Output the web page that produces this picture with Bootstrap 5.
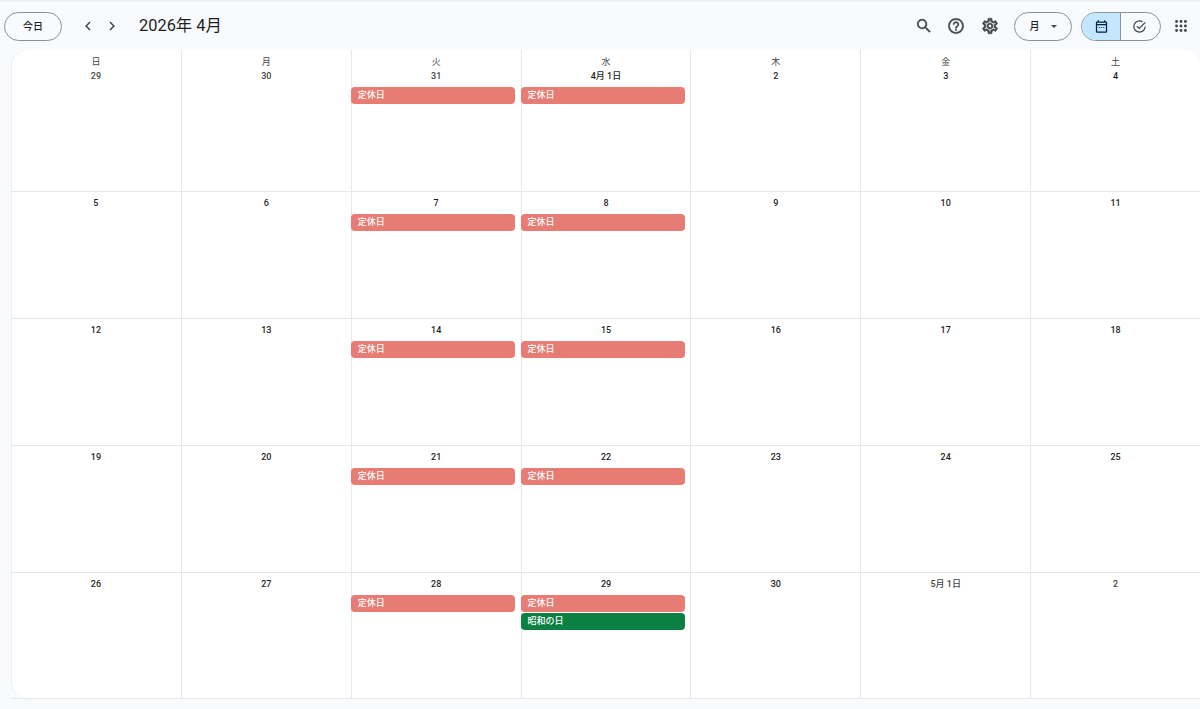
<!DOCTYPE html>
<html lang="ja">
<head>
    <meta charset="UTF-8">
    <meta name="viewport" content="width=device-width, initial-scale=1.0">
    <title>2026年 4月</title>
    <link href="https://cdn.jsdelivr.net/npm/bootstrap@5.3.0/dist/css/bootstrap.min.css" rel="stylesheet">
    <style>
        html, body { height: 100%; }
        body {
            background: #f8fafd;
            color: #1f1f1f;
            font-family: Roboto, "Noto Sans CJK JP", sans-serif;
            overflow: hidden;
        }
        .top-rule { height: 2px; background: #f0f1f2; }
        .cal-header { height: 48px; padding: 0 0 0 4px; }
        .pill-btn {
            height: 29px;
            width: 58px;
            padding: 0;
            border: 1px solid #8e918f;
            border-radius: 15px;
            background: transparent;
            color: #1f1f1f;
            font-size: 10px;
            font-weight: 500;
        }
        .nav-arrows { margin-left: 17px; gap: 6px; }
        .icon-btn {
            width: 18px;
            height: 18px;
            padding: 0;
            border: 0;
            background: none;
            line-height: 0;
        }
        .icon-btn svg { width: 18px; height: 18px; fill: #444746; }
        .tools .icon-btn, .tools .icon-btn svg { width: 20px; height: 20px; }
        .tools .icon-btn svg { stroke: #444746; stroke-width: .4; }
        .tools .icon-btn .gear-icon { stroke-width: .8; }
        .tools .icon-btn .apps-icon { stroke: none; }
        .cal-title { margin: 0 0 0 18px; font-size: 16.4px; font-weight: 400; line-height: 24px; }
        .tools { margin-right: 9px; }
        .tool-help { margin: 0 14px 0 12px; }
        .tool-view { margin: 0 9px 0 14px; }
        .view-btn { gap: 11px; }
        .view-caret {
            border-top: 3px solid #444746;
            border-left: 3px solid transparent;
            border-right: 3px solid transparent;
        }
        .view-switch {
            width: 80px;
            height: 29px;
            border: 1px solid #8e918f;
            border-radius: 15px;
            overflow: hidden;
            margin-right: 10px;
        }
        .view-switch > div { flex: 1; }
        .view-switch > div + div { border-left: 1px solid #8e918f; padding-right: 2px; }
        .view-on { background: #c2e7ff; padding-left: 1px; }
        .view-switch svg { width: 15px; height: 15px; }
        .grid-wrap { margin-left: 11px; border-bottom: 1px solid #e6e8ec; }
        .grid-panel {
            background: #fff;
            box-shadow: inset 1px 0 0 #eceef2;
            border-radius: 16px 16px 0 16px;
            overflow: hidden;
        }
        .week {
            display: grid;
            grid-template-columns: repeat(7, 1fr);
            height: 127px;
            border-bottom: 1px solid #e4e7ec;
        }
        .week:first-child { height: 142px; }
        .week:last-child { border-bottom: 0; height: 125px; }
        .day { padding-top: 4px; text-align: center; min-width: 0; }
        .day + .day { border-left: 1px solid #e4e7ec; }
        .week:first-child .day { padding-top: 6px; }
        .wd { font-size: 9px; line-height: 12px; margin-bottom: 1px; color: #444746; }
        .dt { font-size: 9px; line-height: 15px; font-weight: 500; color: #1f1f1f; }
        .dt-other { color: #444746; }
        .ev {
            height: 17px;
            margin: 1px 5.5px 0 -1px;
            padding-left: 7px;
            border-radius: 4px;
            color: #fff;
            font-size: 9px;
            font-weight: 500;
            line-height: 16px;
            text-align: left;
        }
        .dt + .ev { margin-top: 3px; }
        .ev-off { background: #e67c73; }
        .ev-hol { background: #0b8043; }
    </style>
</head>
<body>
    <div class="top-rule"></div>
    <header class="cal-header d-flex align-items-center">
        <button class="btn pill-btn">今日</button>
        <div class="d-flex nav-arrows">
            <button class="icon-btn"><svg viewBox="0 0 24 24"><path d="M15.41 7.41 14 6l-6 6 6 6 1.41-1.41L10.83 12z"/></svg></button>
            <button class="icon-btn"><svg viewBox="0 0 24 24"><path d="M10 6 8.59 7.41 13.17 12l-4.58 4.59L10 18l6-6z"/></svg></button>
        </div>
        <h1 class="cal-title">2026年 4月</h1>
        <div class="d-flex align-items-center tools ms-auto">
            <button class="icon-btn"><svg viewBox="-1 -1 26 26"><path d="M15.5 14h-.79l-.28-.27A6.471 6.471 0 0 0 16 9.5 6.5 6.5 0 1 0 9.5 16c1.61 0 3.09-.59 4.23-1.57l.27.28v.79l5 4.99L20.49 19l-4.99-5zm-6 0C7.01 14 5 11.99 5 9.5S7.01 5 9.5 5 14 7.01 14 9.5 11.99 14 9.5 14z"/></svg></button>
            <button class="icon-btn tool-help"><svg viewBox="-1 -1 26 26"><path d="M11 18h2v-2h-2v2zm1-16C6.48 2 2 6.48 2 12s4.48 10 10 10 10-4.48 10-10S17.52 2 12 2zm0 18c-4.41 0-8-3.59-8-8s3.59-8 8-8 8 3.59 8 8-3.59 8-8 8zm0-14c-2.21 0-4 1.79-4 4h2c0-1.1.9-2 2-2s2 .9 2 2c0 2-3 1.75-3 5h2c0-2.25 3-2.5 3-5 0-2.21-1.79-4-4-4z"/></svg></button>
            <button class="icon-btn"><svg class="gear-icon" viewBox="-1 -1 26 26"><path d="M19.43 12.98c.04-.32.07-.64.07-.98 0-.34-.03-.66-.07-.98l2.11-1.65c.19-.15.24-.42.12-.64l-2-3.46c-.09-.16-.26-.25-.44-.25-.06 0-.12.01-.17.03l-2.49 1c-.52-.4-1.08-.73-1.69-.98l-.38-2.65C14.46 2.18 14.25 2 14 2h-4c-.25 0-.46.18-.49.42l-.38 2.65c-.61.25-1.17.59-1.69.98l-2.49-1c-.06-.02-.12-.03-.18-.03-.17 0-.34.09-.43.25l-2 3.46c-.13.22-.07.49.12.64l2.11 1.65c-.04.32-.07.65-.07.98 0 .33.03.66.07.98l-2.11 1.65c-.19.15-.24.42-.12.64l2 3.46c.09.16.26.25.44.25.06 0 .12-.01.17-.03l2.49-1c.52.4 1.08.73 1.69.98l.38 2.65c.03.24.24.42.49.42h4c.25 0 .46-.18.49-.42l.38-2.65c.61-.25 1.17-.59 1.69-.98l2.49 1c.06.02.12.03.18.03.17 0 .34-.09.43-.25l2-3.46c.12-.22.07-.49-.12-.64l-2.11-1.65zm-1.98-1.71c.04.31.05.52.05.73 0 .21-.02.43-.05.73l-.14 1.13.89.7 1.08.84-.7 1.21-1.27-.51-1.04-.42-.9.68c-.43.32-.84.56-1.25.73l-1.06.43-.16 1.13-.2 1.35h-1.4l-.19-1.35-.16-1.13-1.06-.43c-.43-.18-.83-.41-1.23-.71l-.91-.7-1.06.43-1.27.51-.7-1.21 1.08-.84.89-.7-.14-1.13c-.03-.31-.05-.54-.05-.74s.02-.43.05-.73l.14-1.13-.89-.7-1.08-.84.7-1.21 1.27.51 1.04.42.9-.68c.43-.32.84-.56 1.25-.73l1.06-.43.16-1.13.2-1.35h1.39l.19 1.35.16 1.13 1.06.43c.43.18.83.41 1.23.71l.91.7 1.06-.43 1.27-.51.7 1.21-1.07.85-.89.7.14 1.13zM12 8c-2.21 0-4 1.79-4 4s1.79 4 4 4 4-1.79 4-4-1.79-4-4-4zm0 6c-1.1 0-2-.9-2-2s.9-2 2-2 2 .9 2 2-.9 2-2 2z"/></svg></button>
            <button class="btn pill-btn view-btn tool-view d-flex align-items-center justify-content-center"><span>月</span><span class="view-caret"></span></button>
            <div class="view-switch d-flex">
                <div class="view-on d-flex align-items-center justify-content-center">
                    <svg viewBox="0 0 24 24" fill="#041e49"><path d="M19 4h-1V2h-2v2H8V2H6v2H5a2 2 0 0 0-2 2v14a2 2 0 0 0 2 2h14a2 2 0 0 0 2-2V6a2 2 0 0 0-2-2zm0 16H5V10h14v10zm0-12H5V6h14v2z"/><path d="M7.5 13h2v1.5h-2zM11 13h2v1.5h-2zM14.500 13h2v1.500h-2z"/></svg>
                </div>
                <div class="d-flex align-items-center justify-content-center">
                    <svg viewBox="0 0 24 24" fill="#444746"><path d="M12 2a10 10 0 1 0 10 10h-2a8 8 0 1 1-8-8 7.900 7.900 0 0 1 4.200 1.200l1.400-1.450A9.900 9.900 0 0 0 12 2z"/><path d="m20.600 4.600-9.100 9.100-3.100-3.100L7 12l4.500 4.500L22 6z"/></svg>
                </div>
            </div>
            <button class="icon-btn"><svg class="apps-icon" viewBox="-1.500 -1.500 27 27"><path d="M6 8a2 2 0 1 0 0-4 2 2 0 0 0 0 4zm6 0a2 2 0 1 0 0-4 2 2 0 0 0 0 4zm6-4a2 2 0 1 0 0 4 2 2 0 0 0 0-4zM6 14a2 2 0 1 0 0-4 2 2 0 0 0 0 4zm6 0a2 2 0 1 0 0-4 2 2 0 0 0 0 4zm6-4a2 2 0 1 0 0 4 2 2 0 0 0 0-4zM6 20a2 2 0 1 0 0-4 2 2 0 0 0 0 4zm6 0a2 2 0 1 0 0-4 2 2 0 0 0 0 4zm6-4a2 2 0 1 0 0 4 2 2 0 0 0 0-4z"/></svg></button>
        </div>
    </header>

    <main class="grid-wrap">
        <div class="grid-panel">
            <div class="week">
                <div class="day"><div class="wd">日</div><div class="dt dt-other">29</div></div>
                <div class="day"><div class="wd">月</div><div class="dt dt-other">30</div></div>
                <div class="day"><div class="wd">火</div><div class="dt dt-other">31</div><div class="ev ev-off">定休日</div></div>
                <div class="day"><div class="wd">水</div><div class="dt">4月 1日</div><div class="ev ev-off">定休日</div></div>
                <div class="day"><div class="wd">木</div><div class="dt">2</div></div>
                <div class="day"><div class="wd">金</div><div class="dt">3</div></div>
                <div class="day"><div class="wd">土</div><div class="dt">4</div></div>
            </div>
            <div class="week">
                <div class="day"><div class="dt">5</div></div>
                <div class="day"><div class="dt">6</div></div>
                <div class="day"><div class="dt">7</div><div class="ev ev-off">定休日</div></div>
                <div class="day"><div class="dt">8</div><div class="ev ev-off">定休日</div></div>
                <div class="day"><div class="dt">9</div></div>
                <div class="day"><div class="dt">10</div></div>
                <div class="day"><div class="dt">11</div></div>
            </div>
            <div class="week">
                <div class="day"><div class="dt">12</div></div>
                <div class="day"><div class="dt">13</div></div>
                <div class="day"><div class="dt">14</div><div class="ev ev-off">定休日</div></div>
                <div class="day"><div class="dt">15</div><div class="ev ev-off">定休日</div></div>
                <div class="day"><div class="dt">16</div></div>
                <div class="day"><div class="dt">17</div></div>
                <div class="day"><div class="dt">18</div></div>
            </div>
            <div class="week">
                <div class="day"><div class="dt">19</div></div>
                <div class="day"><div class="dt">20</div></div>
                <div class="day"><div class="dt">21</div><div class="ev ev-off">定休日</div></div>
                <div class="day"><div class="dt">22</div><div class="ev ev-off">定休日</div></div>
                <div class="day"><div class="dt">23</div></div>
                <div class="day"><div class="dt">24</div></div>
                <div class="day"><div class="dt">25</div></div>
            </div>
            <div class="week">
                <div class="day"><div class="dt">26</div></div>
                <div class="day"><div class="dt">27</div></div>
                <div class="day"><div class="dt">28</div><div class="ev ev-off">定休日</div></div>
                <div class="day"><div class="dt">29</div><div class="ev ev-off">定休日</div><div class="ev ev-hol">昭和の日</div></div>
                <div class="day"><div class="dt">30</div></div>
                <div class="day"><div class="dt dt-other">5月 1日</div></div>
                <div class="day"><div class="dt dt-other">2</div></div>
            </div>
        </div>
    </main>

    <script src="https://cdn.jsdelivr.net/npm/bootstrap@5.3.0/dist/js/bootstrap.bundle.min.js"></script>
</body>
</html>
